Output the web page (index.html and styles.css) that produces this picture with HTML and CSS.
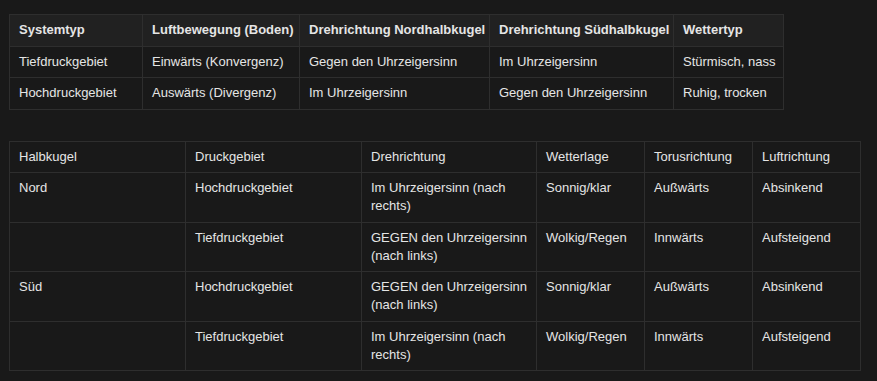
FILE: index.html
```html
<!DOCTYPE html>
<html lang="de">
<head>
<meta charset="utf-8">
<link rel="stylesheet" href="styles.css">
</head>
<body>
<main class="page">
  <table class="tbl tbl-compact">
    <colgroup>
      <col class="k1"><col class="k2"><col class="k3"><col class="k4"><col class="k5">
    </colgroup>
    <thead>
      <tr><th>Systemtyp</th><th>Luftbewegung (Boden)</th><th>Drehrichtung Nordhalbkugel</th><th>Drehrichtung Südhalbkugel</th><th>Wettertyp</th></tr>
    </thead>
    <tbody>
      <tr><td>Tiefdruckgebiet</td><td>Einwärts (Konvergenz)</td><td>Gegen den Uhrzeigersinn</td><td>Im Uhrzeigersinn</td><td>Stürmisch, nass</td></tr>
      <tr><td>Hochdruckgebiet</td><td>Auswärts (Divergenz)</td><td>Im Uhrzeigersinn</td><td>Gegen den Uhrzeigersinn</td><td>Ruhig, trocken</td></tr>
    </tbody>
  </table>
  <table class="tbl tbl-wide">
    <colgroup>
      <col class="c-wide"><col class="c-wide"><col class="c-mid"><col class="c-narrow"><col class="c-narrow"><col class="c-narrow">
    </colgroup>
    <thead>
      <tr><th>Halbkugel</th><th>Druckgebiet</th><th>Drehrichtung</th><th>Wetterlage</th><th>Torusrichtung</th><th>Luftrichtung</th></tr>
    </thead>
    <tbody>
      <tr><td>Nord</td><td>Hochdruckgebiet</td><td>Im Uhrzeigersinn (nach rechts)</td><td>Sonnig/klar</td><td>Außwärts</td><td>Absinkend</td></tr>
      <tr><td></td><td>Tiefdruckgebiet</td><td>GEGEN den Uhrzeigersinn (nach links)</td><td>Wolkig/Regen</td><td>Innwärts</td><td>Aufsteigend</td></tr>
      <tr><td>Süd</td><td>Hochdruckgebiet</td><td>GEGEN den Uhrzeigersinn (nach links)</td><td>Sonnig/klar</td><td>Außwärts</td><td>Absinkend</td></tr>
      <tr><td></td><td>Tiefdruckgebiet</td><td>Im Uhrzeigersinn (nach rechts)</td><td>Wolkig/Regen</td><td>Innwärts</td><td>Aufsteigend</td></tr>
    </tbody>
  </table>
</main>
</body>
</html>
```

FILE: styles.css
```css
html, body {
  margin: 0;
  background: #191919;
}
body {
  font-family: "Liberation Sans", Arial, sans-serif;
  font-size: 13px;
  line-height: 18px;
  color: #e5e5e5;
}
.page {
  display: flex;
  flex-direction: column;
  align-items: flex-start;
  gap: 31px;
  padding: 14px 0 0 9px;
}
.tbl {
  border-collapse: collapse;
  table-layout: fixed;
}
.tbl th, .tbl td {
  border: 1px solid #2e2e2e;
  padding: 6px 8px 6.5px 9px;
  text-align: left;
  vertical-align: top;
}
.tbl-compact {
  width: 774px;
}
.tbl-compact th, .tbl-compact td {
  white-space: nowrap;
}
.tbl-compact th {
  background: #212121;
  font-weight: 700;
}
.k1 { width: 133px; }
.k2 { width: 157px; }
.k3 { width: 190px; }
.k4 { width: 184px; }
.k5 { width: 110px; }
.tbl-wide th {
  font-weight: 400;
}
.tbl-wide {
  width: 851px;
}
.c-wide { width: 176px; }
.c-mid { width: 175px; }
.c-narrow { width: 108px; }
```
